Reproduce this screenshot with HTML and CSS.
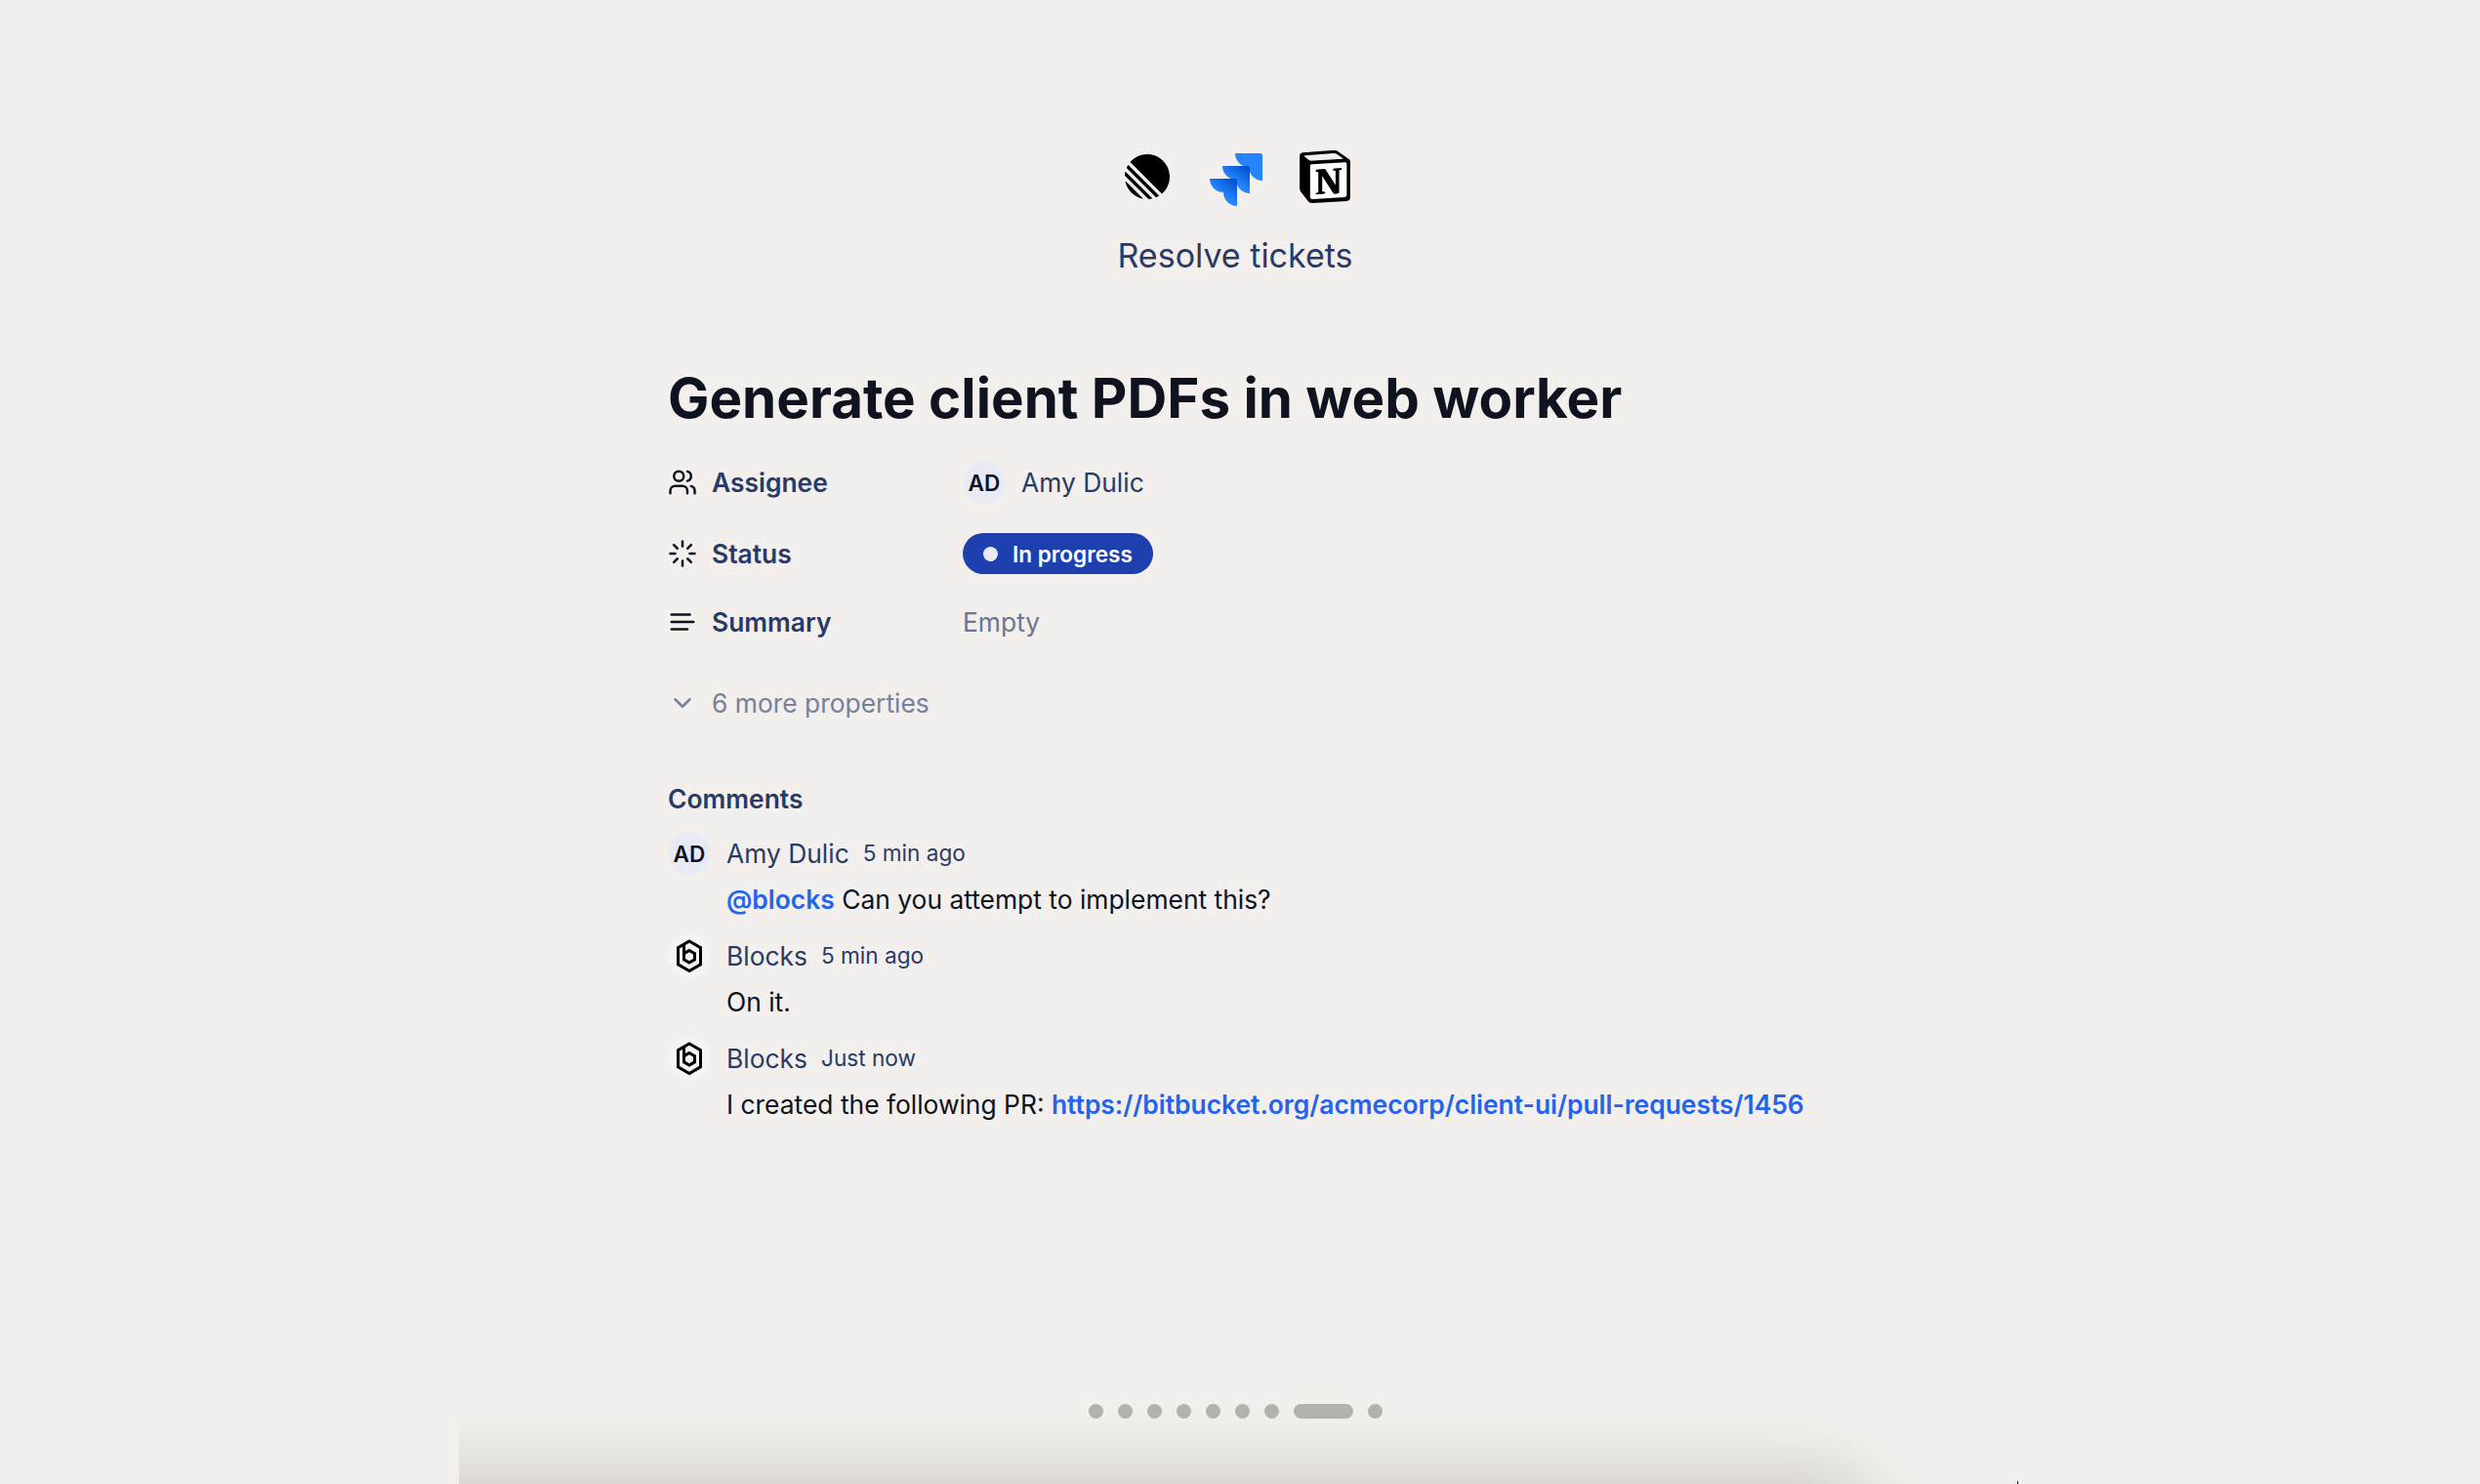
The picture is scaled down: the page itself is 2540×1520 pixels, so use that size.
FILE: index.html
```html
<!DOCTYPE html>
<html lang="en">
<head>
  <meta charset="UTF-8">
  <title>Resolve tickets</title>
  <link rel="stylesheet" href="styles.css">
</head>
<body>
  <div class="shadow-clip"><div class="next-card"></div></div>

  <header class="integrations">
    <div class="logos">
      <svg class="logo-linear" viewBox="0 0 100 100"><path d="M1.22541 61.5228c-.2225-.9485.90748-1.5459 1.59638-.857L39.3342 97.1782c.6889.6889.0915 1.8189-.857 1.5964C20.0515 94.4522 5.54779 79.9485 1.22541 61.5228ZM.00189135 46.8891c-.01764375.2833.08887215.5599.28957165.7606L52.3503 99.7085c.2007.2007.4773.3075.7606.2896 2.3692-.1476 4.6938-.46 6.9624-.9259.7645-.157 1.0301-1.0963.4782-1.6481L2.57595 39.4485c-.55186-.5519-1.49117-.2863-1.648174.4782-.465915 2.2686-.77832 4.5932-.92588465 6.9624ZM4.21093 29.7054c-.16649.3738-.08169.8106.20765 1.1l64.77602 64.776c.2894.2894.7262.3742 1.1.2077 1.7861-.7956 3.5171-1.6927 5.1855-2.684.5521-.328.6373-1.0867.1832-1.5407L8.43566 24.3367c-.45409-.4541-1.21271-.3689-1.54074.1832-.99132 1.6684-1.88843 3.3994-2.68399 5.1855ZM12.6587 18.074c-.3701-.3701-.393-.9637-.0443-1.3541C21.7795 6.45931 35.1114 0 49.9519 0 77.5927 0 100 22.4073 100 50.0481c0 14.8405-6.4593 28.1724-16.7199 37.3375-.3903.3487-.984.3258-1.3542-.0443L12.6587 18.074Z"/></svg>
      <svg class="logo-jira" viewBox="0 0 54 55">
        <defs>
          <linearGradient id="jiraShade" x1="0.9" y1="0.05" x2="0.5" y2="0.6">
            <stop offset="0" stop-color="#0052cc"/>
            <stop offset="1" stop-color="#2684ff"/>
          </linearGradient>
        </defs>
        <path fill="#2684ff" d="M26 0H52Q54 0 54 2V28C46.300 28 40 21.700 40 14C32.300 14 26 7.700 26 0Z"/>
        <path fill="url(#jiraShade)" d="M13 13H39Q41 13 41 15V41C33.300 41 27 34.700 27 27C19.300 27 13 20.700 13 13Z"/>
        <path fill="url(#jiraShade)" d="M0 26H26Q28 26 28 28V54C20.300 54 14 47.700 14 40C6.300 40 0 33.700 0 26Z"/>
      </svg>
      <svg class="logo-notion" viewBox="0 0 24 24">
        <path fill="#fff" d="M4 5l18-1v17L6 23 4 20z"/>
        <path d="M4.459 4.208c.746.606 1.026.56 2.428.466l13.215-.793c.28 0 .047-.28-.046-.326L17.86 1.968c-.42-.326-.981-.7-2.055-.607L3.01 2.295c-.466.046-.56.28-.374.466zm.793 3.08v13.904c0 .747.373 1.027 1.214.98l14.523-.84c.841-.046.935-.56.935-1.167V6.354c0-.606-.233-.933-.748-.887l-15.177.887c-.56.047-.747.327-.747.933zm14.337.745c.093.42 0 .84-.42.888l-.7.14v10.264c-.608.327-1.168.514-1.635.514-.748 0-.935-.234-1.495-.933l-4.577-7.186v6.952L12.21 19s0 .84-1.168.84l-3.222.186c-.093-.186 0-.653.327-.746l.84-.233V9.854L7.822 9.76c-.094-.42.14-1.026.793-1.073l3.456-.233 4.764 7.279v-6.44l-1.215-.14c-.093-.514.28-.887.747-.933zM1.936 1.035l13.31-.98c1.634-.14 2.055-.047 3.082.7l4.249 2.986c.7.513.934.653.934 1.213v16.378c0 1.026-.373 1.634-1.68 1.726l-15.458.934c-.98.047-1.448-.093-1.962-.747l-3.129-4.06c-.56-.747-.793-1.306-.793-1.96V2.667c0-.839.374-1.54 1.447-1.632z"/>
      </svg>
    </div>
    <p class="integrations-label">Resolve tickets</p>
  </header>

  <main class="ticket">
    <h1>Generate client PDFs in web worker</h1>

    <div class="properties">
      <div class="property property-assignee">
        <div class="property-name">
          <svg class="prop-icon" viewBox="0 0 24 24"><path d="M16 21v-2a4 4 0 0 0-4-4H6a4 4 0 0 0-4 4v2"/><circle cx="9" cy="7" r="4"/><path d="M22 21v-2a4 4 0 0 0-3-3.870"/><path d="M16 3.130a4 4 0 0 1 0 7.750"/></svg>
          <span>Assignee</span>
        </div>
        <div class="property-value">
          <span class="avatar">AD</span>
          <span>Amy Dulic</span>
        </div>
      </div>
      <div class="property property-status">
        <div class="property-name">
          <svg class="prop-icon" viewBox="0 0 24 24"><path d="M12 2v4"/><path d="m16.200 7.800 2.900-2.900"/><path d="M18 12h4"/><path d="m16.200 16.200 2.900 2.900"/><path d="M12 18v4"/><path d="m4.900 19.100 2.900-2.900"/><path d="M2 12h4"/><path d="m4.900 4.900 2.900 2.900"/></svg>
          <span>Status</span>
        </div>
        <div class="property-value">
          <span class="status-pill"><i class="status-dot"></i>In progress</span>
        </div>
      </div>
      <div class="property property-summary">
        <div class="property-name">
          <svg class="prop-icon" viewBox="0 0 24 24"><path d="M3 6h15"/><path d="M3 12h18"/><path d="M3 18h13"/></svg>
          <span>Summary</span>
        </div>
        <div class="property-value muted">Empty</div>
      </div>
      <div class="more-properties">
        <svg class="prop-icon" viewBox="0 0 24 24"><path d="m6 9 6 6 6-6"/></svg>
        <span>6 more properties</span>
      </div>
    </div>

    <section class="comments">
      <h2>Comments</h2>

      <article class="comment">
        <span class="avatar">AD</span>
        <div class="comment-head"><span class="comment-author">Amy Dulic</span><span class="comment-time">5 min ago</span></div>
        <p class="comment-body"><a href="#">@blocks</a> Can you attempt to implement this?</p>
      </article>

      <article class="comment">
        <span class="avatar avatar-bot">
          <svg viewBox="3 3 44 44"><path d="M25 10 36.500 16.700V33.800L25 40.500 13.500 33.800V16.700Z"/><path d="M25 19.500 30.500 22.700V28.800L25 32 19.500 28.800V22.700Z"/><path d="M19.500 23V14"/></svg>
        </span>
        <div class="comment-head"><span class="comment-author">Blocks</span><span class="comment-time">5 min ago</span></div>
        <p class="comment-body">On it.</p>
      </article>

      <article class="comment">
        <span class="avatar avatar-bot">
          <svg viewBox="3 3 44 44"><path d="M25 10 36.500 16.700V33.800L25 40.500 13.500 33.800V16.700Z"/><path d="M25 19.500 30.500 22.700V28.800L25 32 19.500 28.800V22.700Z"/><path d="M19.500 23V14"/></svg>
        </span>
        <div class="comment-head"><span class="comment-author">Blocks</span><span class="comment-time">Just now</span></div>
        <p class="comment-body">I created the following PR: <a href="#">https://bitbucket.org/acmecorp/client-ui/pull-requests/1456</a></p>
      </article>
    </section>
  </main>

  <nav class="pager">
    <i></i><i></i><i></i><i></i><i></i><i></i><i></i><i class="current"></i><i></i>
  </nav>

  <span class="cursor-tick"></span>
</body>
</html>
```

FILE: styles.css
```css
body {
  margin: 0;
  width: 2540px;
  height: 1520px;
  overflow: hidden;
  position: relative;
  background: #f2efec;
  font-family: Inter, "Liberation Sans", sans-serif;
  color: #2a3a66;
}

.shadow-clip {
  position: absolute;
  left: 470px;
  top: 1380px;
  width: 1600px;
  height: 140px;
  overflow: hidden;
}

.next-card {
  position: absolute;
  left: -200px;
  top: 140px;
  width: 1635px;
  height: 200px;
  border-radius: 40px;
  box-shadow: 0 0 70px 10px rgba(60, 50, 40, 0.2);
}

.integrations {
  padding-top: 152px;
  text-align: center;
}

.logos {
  display: flex;
  justify-content: center;
  align-items: center;
  height: 58px;
}

.logo-linear {
  width: 46px;
  height: 46px;
  margin-right: 41px;
}

.logo-jira {
  width: 54px;
  height: 55px;
  margin-right: 37px;
  margin-top: 6px;
}

.logo-notion {
  width: 54px;
  height: 54px;
  margin-right: 4px;
}

.integrations-label {
  margin: 28px 0 0;
  padding-right: 10px;
  font-size: 34px;
  line-height: 48px;
}

.ticket {
  margin-left: 684px;
  width: 1400px;
}

h1 {
  margin: 86px 0 0;
  font-size: 56.500px;
  line-height: 72px;
  font-weight: 700;
  color: #0f1320;
}

.properties {
  margin-top: 24px;
}

.property {
  display: flex;
  align-items: center;
  height: 52px;
}

.property-status {
  margin-top: 21px;
}

.property-summary {
  margin-top: 18px;
}

.property-name {
  display: flex;
  align-items: center;
  width: 302px;
  font-size: 26.400px;
  font-weight: 600;
}

.prop-icon {
  width: 30px;
  height: 30px;
  margin-right: 15px;
  flex: none;
  fill: none;
  stroke: #0f1320;
  stroke-width: 2;
  stroke-linecap: round;
  stroke-linejoin: round;
}

.property-value {
  display: flex;
  align-items: center;
  gap: 16px;
  font-size: 26.400px;
}

.muted {
  color: #6d7690;
}

.avatar {
  display: flex;
  align-items: center;
  justify-content: center;
  flex: none;
  width: 44px;
  height: 44px;
  border-radius: 50%;
  background: #e8ebf4;
  color: #0f1320;
  font-size: 22.600px;
  font-weight: 600;
}

.avatar-bot {
  background: #f6f4f2;
}

.avatar-bot svg {
  width: 44px;
  height: 44px;
  fill: none;
  stroke: #000;
  stroke-width: 3;
  stroke-linejoin: miter;
}

.status-pill {
  display: flex;
  align-items: center;
  height: 42px;
  padding: 0 21px;
  border-radius: 21px;
  background: #1e40af;
  color: #fff;
  font-size: 22.600px;
  font-weight: 600;
}

.status-dot {
  width: 15px;
  height: 15px;
  margin-right: 15px;
  border-radius: 50%;
  background: #e8ebf6;
}

.more-properties {
  display: flex;
  align-items: center;
  margin-top: 41px;
  font-size: 26.400px;
  color: #78809a;
}

.more-properties .prop-icon {
  stroke: #78809a;
}

.comments {
  margin-top: 64px;
}

h2 {
  margin: 0;
  font-size: 26.400px;
  line-height: 36px;
  font-weight: 600;
}

.comment {
  display: grid;
  grid-template-columns: 44px 1fr;
  column-gap: 16px;
  margin-top: 16px;
}

.comment-head {
  display: flex;
  align-items: center;
  gap: 14px;
  height: 44px;
  line-height: 44px;
  font-size: 26.400px;
}

.comment-time {
  font-size: 22.600px;
}

.comment-body {
  grid-column: 2;
  margin: 5px 0 0;
  font-size: 26.400px;
  line-height: 40px;
  color: #0f1320;
}

.comment-body a {
  color: #2563eb;
  font-weight: 600;
  text-decoration: none;
}

.pager {
  position: absolute;
  left: 1114.500px;
  top: 1437.500px;
  display: flex;
  gap: 15px;
}

.pager i {
  width: 15.100px;
  height: 15px;
  border-radius: 8px;
  background: #b3b1ab;
}

.pager .current {
  width: 60.500px;
}

.cursor-tick {
  position: absolute;
  left: 2066px;
  top: 1517px;
  width: 1px;
  height: 3px;
  background: #111;
}
```
